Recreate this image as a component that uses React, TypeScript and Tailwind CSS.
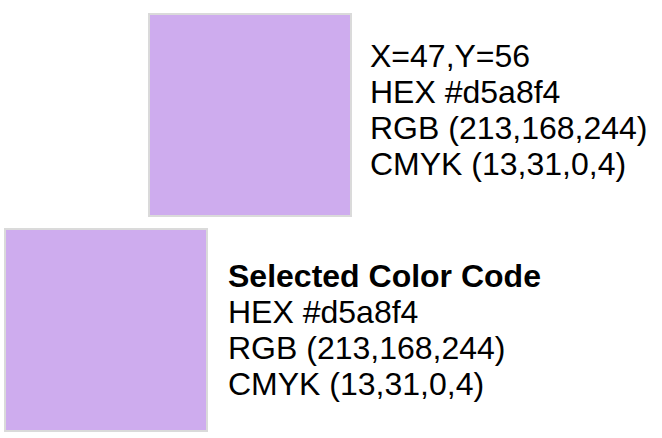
export default function App() {
  const swatch = 'w-[204px] h-[204px] shrink-0 border-2 border-[#dadada] bg-[#ceacee]'
  return (
    <div className="w-[662px] h-[438px] bg-white text-black font-['Liberation_Sans',Arial,sans-serif] text-[32px] leading-[36px]">
      <div className="flex items-center gap-[18px] pl-[148px] pt-[13px]">
        <div className={swatch}></div>
        <div className="-mt-[10px]">
          <div>X=47,Y=56</div>
          <div>HEX #d5a8f4</div>
          <div>RGB (213,168,244)</div>
          <div>CMYK (13,31,0,4)</div>
        </div>
      </div>
      <div className="flex items-center gap-[20px] pl-[4px] mt-[11px]">
        <div className={swatch}></div>
        <div>
          <div className="font-bold">Selected Color Code</div>
          <div>HEX #d5a8f4</div>
          <div>RGB (213,168,244)</div>
          <div>CMYK (13,31,0,4)</div>
        </div>
      </div>
    </div>
  )
}
